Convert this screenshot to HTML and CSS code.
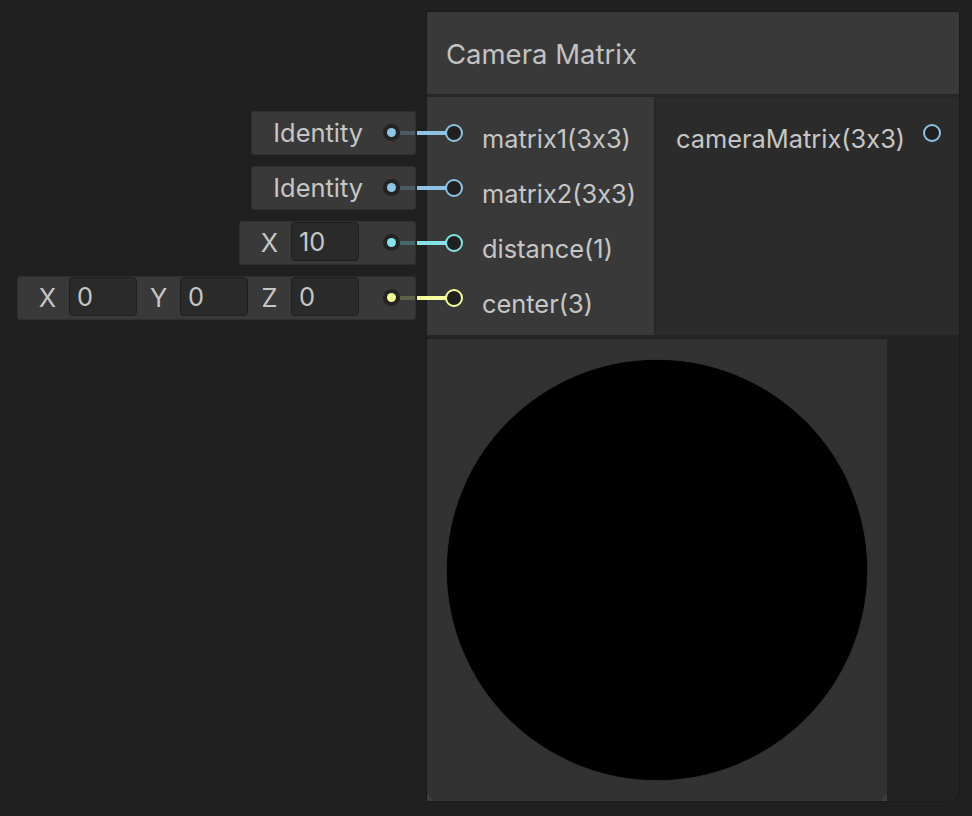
FILE: index.html
```html
<!DOCTYPE html>
<html>
<head>
<meta charset="utf-8">
<link rel="stylesheet" href="styles.css">
</head>
<body>
<div class="canvas">
  <div class="node">
    <div class="title">Camera Matrix</div>
    <div class="ports">
      <div class="inputs">
        <div class="port in matrix">
          <div class="inline">
            <span class="inline-text">Identity</span>
            <span class="dot"></span>
          </div>
          <span class="wire dim"></span><span class="wire bright"></span>
          <span class="pin"></span><span class="label">matrix1(3x3)</span>
        </div>
        <div class="port in matrix">
          <div class="inline">
            <span class="inline-text">Identity</span>
            <span class="dot"></span>
          </div>
          <span class="wire dim"></span><span class="wire bright"></span>
          <span class="pin"></span><span class="label">matrix2(3x3)</span>
        </div>
        <div class="port in vec1">
          <div class="inline fields">
            <span class="axis">X</span><span class="field">10</span>
            <span class="dot"></span>
          </div>
          <span class="wire dim"></span><span class="wire bright"></span>
          <span class="pin"></span><span class="label">distance(1)</span>
        </div>
        <div class="port in vec3">
          <div class="inline fields">
            <span class="axis">X</span><span class="field">0</span>
            <span class="axis">Y</span><span class="field">0</span>
            <span class="axis">Z</span><span class="field">0</span>
            <span class="dot"></span>
          </div>
          <span class="wire dim"></span><span class="wire bright"></span>
          <span class="pin"></span><span class="label">center(3)</span>
        </div>
      </div>
      <div class="outputs">
        <div class="port out matrix">
          <span class="label">cameraMatrix(3x3)</span><span class="pin"></span>
        </div>
      </div>
    </div>
    <div class="body">
      <div class="preview"><div class="sphere"></div></div>
    </div>
  </div>
</div>
</body>
</html>
```
FILE: styles.css
```css
* { box-sizing: border-box; }
html, body {
  margin: 0;
  padding: 0;
  background: #202020;
  width: 972px;
  height: 816px;
  overflow: hidden;
  font-family: "Inter", "Noto Sans", sans-serif;
  font-feature-settings: "calt" 0;
  color: #c6c6c6;
}
.canvas {
  position: relative;
  width: 972px;
  height: 816px;
}
.node {
  position: absolute;
  left: 426px;
  top: 11px;
  width: 534px;
  height: 791px;
  border: 1px solid #1a1a1a;
  border-radius: 3px 3px 10px 2px;
  background: #222222;
  display: flex;
  flex-direction: column;
}
.title {
  flex: none;
  height: 85px;
  background: #393939;
  border-radius: 2px 2px 0 0;
  padding-left: 19px;
  padding-top: 1px;
  display: flex;
  align-items: center;
  font-size: 27.5px;
  color: #c2c2c2;
  border-bottom: 3px solid #262626;
}
.ports {
  display: flex;
  height: 240px;
  flex: none;
  border-bottom: 2px solid #252525;
}
.inputs {
  width: 229px;
  background: #393939;
  border-right: 2px solid #262626;
  padding-top: 8px;
  display: flex;
  flex-direction: column;
}
.outputs {
  flex: 1;
  background: #2b2b2b;
  padding-top: 8px;
}
.port {
  position: relative;
  height: 55px;
  display: flex;
  align-items: center;
  font-size: 25.4px;
}
.port.in { padding-left: 18px; }
.port.out {
  justify-content: space-between;
  padding-left: 20px;
  padding-right: 18px;
}
.label {
  padding-top: 11px;
  color: #c6c6c6;
  white-space: nowrap;
}
.port.in .label { margin-left: 19px; }
.pin {
  width: 18px;
  height: 18px;
  border-radius: 50%;
  border: 2.5px solid var(--c);
  background: #202020;
  flex: none;
  position: relative;
  z-index: 2;
}
.matrix { --c: #8ec3e4; --d: #4a5b66; }
.vec1 { --c: #84e4e7; --d: #46686a; }
.vec3 { --c: #f6ff9a; --d: #5f6148; }

.wire {
  position: absolute;
  top: calc(50% - 1.5px);
  height: 4px;
}
.wire.dim {
  left: -27px;
  width: 15px;
  background: var(--d);
}
.wire.bright {
  left: -10px;
  width: 30px;
  background: var(--c);
}
.inline {
  position: absolute;
  right: calc(100% + 11px);
  top: 50%;
  transform: translateY(-50%);
  height: 44px;
  background: #393939;
  border: 1px solid #2f2f2f;
  border-radius: 3px;
  display: flex;
  align-items: center;
  padding-left: 21px;
  padding-right: 15px;
  font-size: 25.4px;
  white-space: nowrap;
}
.inline-text {
  color: #c6c6c6;
  margin-right: 20px;
}
.inline.fields { padding-left: 8px; }
.axis {
  width: 43px;
  text-align: center;
  color: #c6c6c6;
}
.field {
  width: 68px;
  height: 39px;
  margin-top: -3px;
  background: #2a2a2a;
  border: 1px solid #1f1f1f;
  border-radius: 4px;
  padding-left: 7px;
  display: flex;
  align-items: center;
  color: #c6c6c6;
}
.field + .dot { margin-left: 24px; }
.dot {
  width: 17px;
  height: 17px;
  border-radius: 50%;
  background: #232323;
  display: flex;
  align-items: center;
  justify-content: center;
  flex: none;
}
.dot::after {
  content: "";
  width: 9px;
  height: 9px;
  border-radius: 50%;
  background: var(--c);
}
.body {
  flex: 1;
  padding-top: 2px;
  display: flex;
  border-radius: 0 0 10px 2px;
}
.preview {
  position: relative;
  width: 460px;
  height: 462px;
  background: #323232;
  display: flex;
  align-items: center;
  justify-content: center;
}
.preview::before,
.preview::after {
  content: "";
  position: absolute;
  bottom: 0;
  width: 0;
  height: 0;
  border-style: solid;
}
.preview::before {
  left: 0;
  border-width: 7px 0 0 7px;
  border-color: transparent transparent transparent #3e3e3e;
}
.preview::after {
  right: 0;
  border-width: 0 0 7px 7px;
  border-color: transparent transparent #3e3e3e transparent;
}
.sphere {
  width: 420px;
  height: 420px;
  border-radius: 50%;
  background: #000;
  box-shadow: 0 0 1px #000;
}
```
